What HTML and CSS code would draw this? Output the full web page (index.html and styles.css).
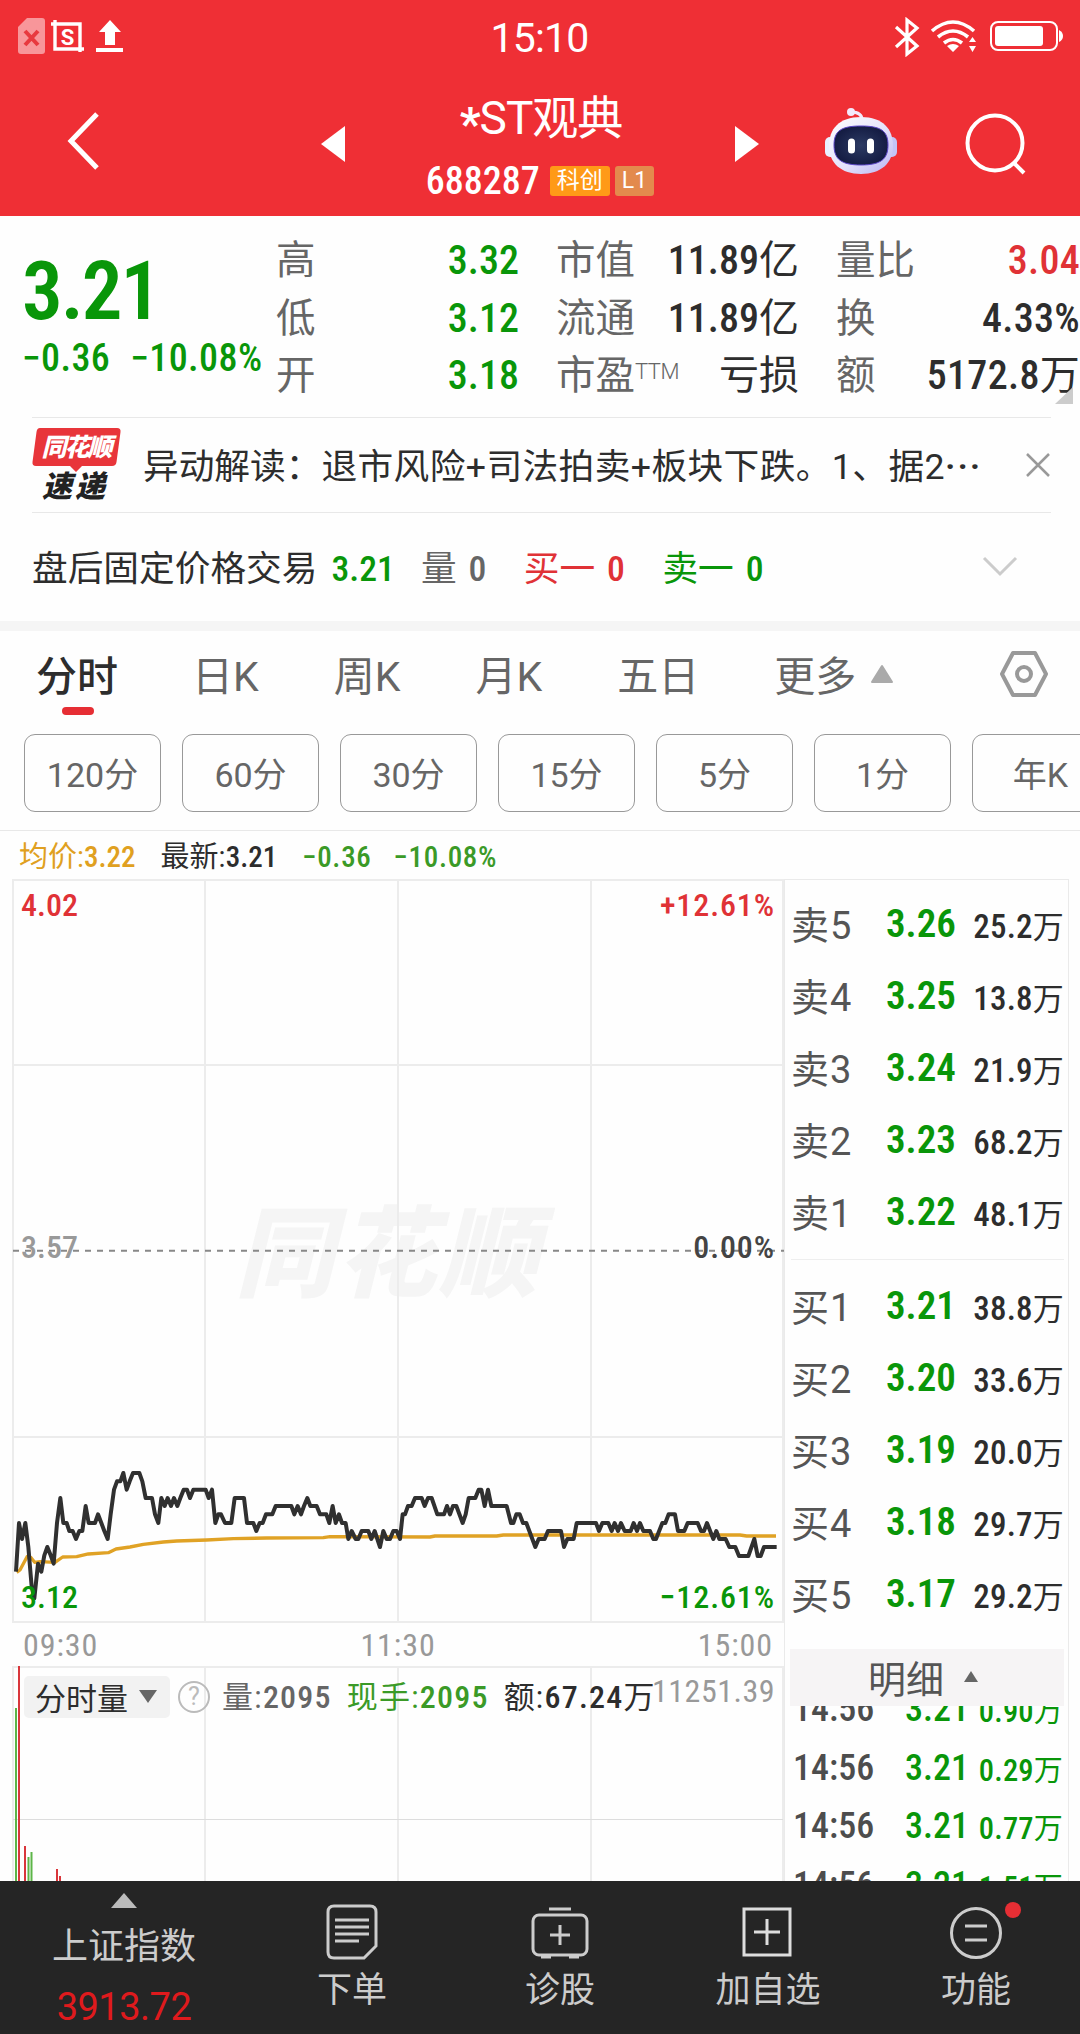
FILE: index.html
```
<!DOCTYPE html>
<html lang="zh-CN">
    <head>
        <meta charset="UTF-8" />
        <meta name="viewport" content="width=device-width, initial-scale=1.0" />
        <title>*ST观典 688287</title>
        <link rel="stylesheet" href="styles.css">
    </head>
    <body>
        <div class="header">
            <div class="status">
                <svg class="status-left" width="110" height="40" viewBox="0 0 110 40">
                    <path d="M10 1h15q3 0 3 3v30q0 3-3 3H4q-3 0-3-3V10z" fill="#f8969a" />
                    <path d="M8 14l13 14M21 14L8 28" stroke="#e8393f" stroke-width="4" />
                    <path d="M34 7h29v28M38 3v29h29" fill="none" stroke="#fff" stroke-width="3.4" />
                    <text x="50.500" y="28" class="shot-s">S</text>
                    <path d="M93 3l11 12h-6v13H88V15h-6zM79 31h27v4H79z" fill="#fff" />
                </svg>
                <div class="clock">15:10</div>
                <svg class="status-right" width="170" height="40" viewBox="0 0 170 40">
                    <g fill="none" stroke="#fff">
                        <path d="M3 10l21 19-10 8V3l10 8L3 30" stroke-width="3.2" />
                        <path d="M39 14q21-18 42 0M45 20q15-12 30 0M51 26q9-7 18 0" stroke-width="3.6" />
                        <rect x="98" y="5" width="66" height="28" rx="7" stroke-width="2" />
                    </g>
                    <path d="M54 29q6-4 12 0l-6 6zM76 25l3.500-5 3.500 5zM76 29h7l-3.500 6z" fill="#fff" />
                    <rect x="102" y="9" width="48" height="20" rx="3" fill="#fff" />
                    <path d="M166 13q4 2 4 6t-4 6z" fill="#fff" />
                </svg>
            </div>
            <div class="nav">
                <svg class="back" width="34" height="58" viewBox="0 0 34 58"><path d="M30 2L4 29l26 27" fill="none" stroke="#fff" stroke-width="5" /></svg>
                <svg class="prev" width="24" height="36"><path d="M24 0v36L0 18z" fill="#fff" /></svg>
                <div class="stock">
                    <div class="stock-name"><b>*</b>ST观典</div>
                    <div class="stock-code"><span class="num">688287</span><i class="tag">科创</i><i class="tag tag-l1">L1</i></div>
                </div>
                <svg class="next" width="24" height="36"><path d="M0 0v36l24-18z" fill="#fff" /></svg>
                <svg class="robot" width="72" height="68" viewBox="0 0 72 68">
                    <defs>
                        <linearGradient id="face" x2="1" y2="1"><stop offset="0" stop-color="#fff" /><stop offset=".55" stop-color="#e4e2fb" /><stop offset="1" stop-color="#b9b5f2" /></linearGradient>
                        <radialGradient id="screen"><stop offset="0" stop-color="#2c3a63" /><stop offset="1" stop-color="#151d44" /></radialGradient>
                    </defs>
                    <path d="M26 5q11 0 11 8" fill="none" stroke="#f3e9fb" stroke-width="3" />
                    <circle cx="26" cy="5" r="4" fill="#f3e9fb" />
                    <rect x="0" y="30" width="11" height="20" rx="5" fill="#e9f0ff" />
                    <rect x="61" y="30" width="11" height="20" rx="5" fill="#c3c4f8" />
                    <path d="M36 10c22 0 32 12 32 29S56 67 36 67 4 56 4 39s10-29 32-29z" fill="url(#face)" />
                    <path d="M36 19c20 0 27 5 27 19s-7 20-27 20S9 52 9 38s7-19 27-19z" fill="url(#screen)" stroke="#5b46c8" stroke-width="1" />
                    <path d="M26.500 35v8M45.500 35v8" stroke="#fff" stroke-width="7" stroke-linecap="round" />
                </svg>
                <svg class="search" width="62" height="62" viewBox="0 0 62 62"><g fill="none" stroke="#fff" stroke-width="4"><circle cx="30" cy="30" r="27.500" /><path d="M48 49l11 11" /></g></svg>
            </div>
        </div>

        <div class="quote">
            <div class="quote-main">
                <div class="price num green">3.21</div>
                <div class="change num green"><span>−0.36</span><span>−10.08%</span></div>
            </div>
            <dl class="col-a">
                <dt>高</dt><dd class="green">3.32</dd>
                <dt>低</dt><dd class="green">3.12</dd>
                <dt>开</dt><dd class="green">3.18</dd>
            </dl>
            <dl class="col-b">
                <dt>市值</dt><dd>11.89<u>亿</u></dd>
                <dt>流通</dt><dd>11.89<u>亿</u></dd>
                <dt>市盈<sup>TTM</sup></dt><dd><u>亏损</u></dd>
            </dl>
            <dl class="col-c">
                <dt>量比</dt><dd class="red">3.04</dd>
                <dt>换</dt><dd>4.33%</dd>
                <dt>额</dt><dd>5172.8<u>万</u></dd>
            </dl>
            <i class="corner"></i>
        </div>

        <div class="news">
            <div class="news-logo">
                <svg width="90" height="74" viewBox="0 0 90 74">
                    <path d="M8 0h77q4 0 3.500 4l-4 30q-.5 4-4.500 4H50l-6 6-6-6H4q-4 0-3.500-4l4-30Q5 0 8 0z" fill="#e8353a" />
                    <text x="44" y="28" class="logo-a">同花顺</text>
                    <text x="43" y="69" class="logo-b">速递</text>
                </svg>
            </div>
            <p>异动解读：<span>退市风险+司法拍卖+板块下跌。1、据2<b>···</b></span></p>
            <svg width="26" height="26"><path d="M2 2l22 22M24 2L2 24" stroke="#999" stroke-width="2.500" /></svg>
        </div>

        <div class="after">
            <span class="after-name">盘后固定价格交易</span>
            <span class="num green">3.21</span>
            <span class="after-vol">量 <b class="num">0</b></span>
            <span class="red">买一 <b class="num">0</b></span>
            <span class="green">卖一 <b class="num">0</b></span>
            <svg width="36" height="22"><path d="M2 2l16 16L34 2" fill="none" stroke="#ccc" stroke-width="3" /></svg>
        </div>

        <div class="tabs">
            <span class="tab active">分时</span>
            <span class="tab">日K</span>
            <span class="tab">周K</span>
            <span class="tab">月K</span>
            <span class="tab">五日</span>
            <span class="tab">更多</span>
            <svg class="more" width="24" height="20"><path d="M12 2L2 18h20z" fill="#aaa" stroke="#aaa" stroke-width="2" stroke-linejoin="round" /></svg>
            <svg class="setting" width="48" height="48" viewBox="0 0 48 48"><g fill="none" stroke="#999" stroke-width="4" stroke-linejoin="round"><path d="M13 3h22l11 21-11 21H13L2 24z" /><circle cx="24" cy="24" r="7" /></g></svg>
        </div>
        <div class="periods">
            <button>120分</button>
            <button>60分</button>
            <button>30分</button>
            <button>15分</button>
            <button>5分</button>
            <button>1分</button>
            <button>年K</button>
        </div>

        <div class="legend">
            <span class="avg">均价:<b class="num">3.22</b></span>
            <span class="last">最新:<b class="num">3.21</b></span>
            <span class="num">−0.36</span>
            <span class="num">−10.08%</span>
        </div>

        <div class="market">
            <div class="charts">
                <div class="trend">
                    <svg width="773" height="745" viewBox="0 0 773 745">
                        <text x="223" y="410" class="watermark">同花顺</text>
                        <path class="grid" d="M1 1h770v742H1zM193 1v742M386 1v742M579 1v742M1 186h770M1 558h770" />
                        <path class="mid" d="M1 371.700h771" />
                        <g transform="translate(-12 521) scale(.33333)">
                            <polyline class="line avg-line" points="50,517 60,510 82,469 92,472 104,487 120,485 165,487 188,471 230,470 265,462 325,458 348,447 390,441 430,433 490,426 530,423 620,420 700,416 800,414 970,413 990,410 1290,411 1305,408 1490,408 1510,405 2220,405 2240,408 2328,408" />
                            <polyline class="line" points="48,515 57,369 66,417 76,369 85,441 95,560 103,595 114,491 124,515 133,466 142,441 152,466 161,491 171,369 181,294 190,369 200,369 208,393 218,393 228,417 238,393 247,393 257,318 266,369 285,369 294,343 304,369 313,393 323,417 332,343 342,269 351,244 361,244 370,219 380,269 389,244 399,219 418,219 427,244 437,294 456,294 465,343 475,369 484,294 494,318 503,294 513,318 522,294 532,318 541,294 551,269 561,269 570,294 580,269 617,269 626,294 636,269 646,369 655,343 663,343 675,369 694,369 704,294 732,294 741,369 760,369 769,393 779,369 788,369 798,343 817,343 827,318 874,318 883,343 893,318 903,343 912,318 922,294 931,318 950,318 960,343 979,343 988,369 998,318 1007,369 1017,343 1026,369 1037,369 1045,417 1055,393 1067,417 1075,417 1085,393 1105,393 1114,417 1124,393 1140,441 1150,393 1160,417 1170,417 1180,393 1190,393 1200,417 1208,343 1215,343 1224,318 1235,318 1245,294 1265,294 1274,318 1284,294 1295,294 1312,343 1332,343 1341,318 1350,343 1359,318 1369,318 1388,369 1397,343 1406,294 1426,294 1436,269 1444,269 1454,318 1464,269 1474,318 1520,318 1533,369 1540,369 1549,343 1559,343 1569,369 1579,369 1597,417 1606,441 1616,417 1634,417 1644,393 1683,393 1692,441 1702,417 1721,417 1730,369 1788,369 1797,393 1807,369 1825,369 1835,393 1844,369 1854,393 1863,369 1874,393 1892,393 1901,369 1911,393 1920,369 1930,393 1950,393 1960,417 1968,417 1987,369 1996,369 2006,343 2025,343 2034,393 2053,393 2063,369 2093,369 2103,393 2112,393 2121,369 2140,417 2149,393 2158,417 2177,417 2188,441 2206,441 2217,468 2245,468 2263,417 2273,468 2282,468 2292,441 2330,441" />
                        </g>
                    </svg>
                    <div class="scale">
                        <div class="red"><span>4.02</span><span>+12.61%</span></div>
                        <div class="middle"><span class="pre">3.57</span><span>0.00%</span></div>
                        <div class="green"><span>3.12</span><span>−12.61%</span></div>
                    </div>
                </div>
                <div class="times num"><span>09:30</span><span>11:30</span><span>15:00</span></div>
                <div class="volume">
                    <svg width="773" height="216" viewBox="0 0 773 216">
                        <path class="grid" d="M771 216V1H1v215M193 1v215M386 1v215M579 1v215" />
                        <path d="M1 153.500h770" stroke="#ddd" />
                        <g stroke-width="2">
                            <path d="M4 42v174M16.500 191v25M19.500 186v30" stroke="#5db548" />
                            <path d="M7 0v216M13 180v36M45 203v13M48 210v6" stroke="#d9363b" />
                        </g>
                    </svg>
                    <div class="volume-bar">
                        <span class="pill">分时量<svg width="18" height="13"><path d="M0 0h18L9 13z" fill="#666" /></svg></span>
                        <span class="help">?</span>
                        <span class="v v-all">量:<b class="num">2095</b></span>
                        <span class="v v-now">现手:<b class="num">2095</b></span>
                        <span class="v v-sum">额:<b class="num">67.24</b>万</span>
                    </div>
                    <div class="v-max num">11251.39</div>
                </div>
            </div>

            <div class="book">
                <ul class="orders">
                    <li><span>卖5</span><b>3.26</b><em>25.2<u>万</u></em></li>
                    <li><span>卖4</span><b>3.25</b><em>13.8<u>万</u></em></li>
                    <li><span>卖3</span><b>3.24</b><em>21.9<u>万</u></em></li>
                    <li><span>卖2</span><b>3.23</b><em>68.2<u>万</u></em></li>
                    <li><span>卖1</span><b>3.22</b><em>48.1<u>万</u></em></li>
                </ul>
                <ul class="orders buy">
                    <li><span>买1</span><b>3.21</b><em>38.8<u>万</u></em></li>
                    <li><span>买2</span><b>3.20</b><em>33.6<u>万</u></em></li>
                    <li><span>买3</span><b>3.19</b><em>20.0<u>万</u></em></li>
                    <li><span>买4</span><b>3.18</b><em>29.7<u>万</u></em></li>
                    <li><span>买5</span><b>3.17</b><em>29.2<u>万</u></em></li>
                </ul>
                <div class="detail-title">明细<svg width="14" height="11"><path d="M7 0l7 11H0z" fill="#666" /></svg></div>
                <div class="ticks">
                    <ul>
                        <li><span>14:56</span><b>3.21</b><em>0.90<u>万</u></em></li>
                        <li><span>14:56</span><b>3.21</b><em>0.29<u>万</u></em></li>
                        <li><span>14:56</span><b>3.21</b><em>0.77<u>万</u></em></li>
                        <li><span>14:56</span><b>3.21</b><em>1.51<u>万</u></em></li>
                    </ul>
                </div>
            </div>
        </div>

        <div class="toolbar">
            <div class="index">
                <svg width="26" height="15"><path d="M13 0l13 15H0z" fill="#bbb" /></svg>
                <span>上证指数</span>
                <strong>3913.72</strong>
            </div>
            <div class="tool">
                <svg width="56" height="56" viewBox="0 0 56 56"><g fill="none" stroke="#ccc" stroke-width="3"><path d="M10 2h36q6 0 6 6v34L40 54H10q-6 0-6-6V8q0-6 6-6z" /><path d="M11 16h34M11 23h34M11 30h34M11 37h24" /></g></svg>
                <span>下单</span>
            </div>
            <div class="tool">
                <svg width="58" height="56" viewBox="0 0 58 56"><g fill="none" stroke="#ccc" stroke-width="3"><rect x="2" y="11" width="54" height="40" rx="6" /><path d="M18 5h22M29 21v20M19 31h20" /><path d="M10 53h10M38 53h10" /></g></svg>
                <span>诊股</span>
            </div>
            <div class="tool">
                <svg width="56" height="56" viewBox="0 0 56 56"><path d="M4 5h46v46H4zM27 15v26M14 28h26" fill="none" stroke="#ddd" stroke-width="3" /></svg>
                <span>加自选</span>
            </div>
            <div class="tool">
                <svg width="56" height="56" viewBox="0 0 56 56"><g fill="none" stroke="#ccc" stroke-width="3"><circle cx="28" cy="29" r="24.500" /><path d="M17 22h22M17 36h22" /></g></svg>
                <span>功能</span>
                <i class="dot"></i>
            </div>
        </div>
    </body>
</html>
```
FILE: styles.css
```
* {
    box-sizing: border-box;
}
body {
    margin: 0;
    width: 1080px;
    height: 2034px;
    overflow: hidden;
    display: flex;
    flex-direction: column;
    font-family: Roboto, 'Noto Sans CJK SC', sans-serif;
    font-weight: 390;
    color: #2d2d2d;
    background: #fefefe;
}
svg {
    display: block;
    flex: none;
}
ul, dl, dt, dd, p {
    margin: 0;
    padding: 0;
    list-style: none;
}
b, i, em, u {
    font-weight: inherit;
    font-style: normal;
    text-decoration: none;
}
u {
    font-weight: 400;
}
.num {
    font-stretch: 75%;
    font-weight: 500;
}
.green {
    color: #099609;
}
.red {
    color: #e03236;
}

/* header */
.header {
    flex: none;
    height: 216px;
    background: #ef2f35;
    color: #fff;
}
.status {
    display: flex;
    justify-content: space-between;
    height: 74px;
    padding: 17px 17px 0 17px;
}
.shot-s {
    font-size: 22px;
    font-weight: 700;
    fill: #fff;
    text-anchor: middle;
}
.clock {
    margin-left: 59px;
    line-height: 43px;
    font-size: 41px;
    font-weight: 400;
    letter-spacing: -0.8px;
}
.nav {
    display: flex;
    align-items: flex-start;
    padding-left: 67px;
}
.back {
    margin-top: 38px;
}
.prev {
    margin: 52px 0 0 220px;
}
.next {
    margin-top: 52px;
}
.stock {
    width: 390px;
    text-align: center;
}
.stock-name {
    margin-top: 13px;
    padding-left: 2px;
    line-height: 62px;
    font-size: 46px;
    font-weight: 400;
    letter-spacing: -1px;
}
.stock-name b {
    font-weight: 700;
    position: relative;
    top: 6px;
}
.stock-code {
    display: flex;
    justify-content: center;
    align-items: center;
    height: 64px;
    line-height: 38px;
    font-size: 38px;
}
.tag {
    height: 30px;
    margin-left: 10px;
    padding: 0 7px;
    border-radius: 3px;
    font-size: 23px;
    line-height: 29px;
    background: #ff9a17;
}
.tag-l1 {
    margin-left: 5px;
    background: #e38a4d;
}
.robot {
    margin: 33px 0 0 66px;
}
.search {
    margin: 39px 0 0 68px;
}

/* quote */
.quote {
    flex: none;
    position: relative;
    display: flex;
    height: 201px;
}
.quote-main {
    width: 276px;
    padding-left: 22px;
}
.price {
    margin-top: 30px;
    font-size: 81px;
    line-height: 92px;
    font-weight: 560;
    letter-spacing: -2px;
}
.change {
    display: flex;
    gap: 20px;
    font-size: 38px;
    line-height: 40px;
    letter-spacing: 0.4px;
}
.quote dl {
    display: grid;
    grid-template-columns: 80px 1fr;
    grid-auto-rows: 57.5px;
    margin-top: 16px;
    height: 173px;
    line-height: 58px;
    font-size: 39.5px;
    white-space: nowrap;
}
.quote dt {
    color: #666;
}
.quote dd {
    text-align: right;
    font-size: 40px;
    font-weight: 550;
    font-stretch: 75%;
}
.col-a {
    width: 243px;
}
.col-b {
    width: 243px;
    margin-left: 37px;
}
.col-c {
    width: 244px;
    margin-left: 37px;
}
.col-c dd {
    letter-spacing: 0.3px;
}
.quote sup {
    position: relative;
    top: 4px;
    font-size: 22px;
    font-weight: 300;
    line-height: 1px;
    letter-spacing: -0.5px;
}
.corner {
    position: absolute;
    right: 7px;
    bottom: 13px;
    border-left: 18px solid transparent;
    border-bottom: 17px solid #ccc;
}

/* news */
.news {
    flex: none;
    display: flex;
    align-items: center;
    height: 96px;
    margin: 0 29px 0 32px;
    border-top: 1px solid #e8e8e8;
    border-bottom: 1px solid #e8e8e8;
    font-size: 35.7px;
}
.news p {
    width: 860px;
    margin: -4px 24px 0 21px;
    white-space: nowrap;
}
.news p span {
    letter-spacing: 0.4px;
}
.news p b {
    font-weight: 600;
    letter-spacing: 2px;
}
.logo-a {
    font-size: 25px;
    font-weight: 900;
    font-style: italic;
    fill: #fff;
    text-anchor: middle;
    letter-spacing: -2px;
}
.logo-b {
    font-size: 30px;
    font-weight: 900;
    font-style: italic;
    letter-spacing: 3px;
    fill: #222;
    text-anchor: middle;
}
.after {
    flex: none;
    display: flex;
    align-items: center;
    height: 118px;
    padding: 0 62px 0 32px;
    border-bottom: 10px solid #f5f5f5;
    font-size: 35.7px;
    line-height: 60px;
    word-spacing: 3px;
    white-space: pre;
}
.after > span {
    height: 60px;
    margin: 3px 37.5px 0 0;
}
.after > .after-name {
    margin-right: 14px;
}
.after > .after-name + span {
    margin-right: 26px;
}
.after-vol {
    color: #666;
}
.after svg {
    margin: -1px 0 0 auto;
}

/* tabs */
.tabs {
    flex: none;
    display: flex;
    height: 103px;
    padding: 0 32px 0 36px;
    align-items: center;
    color: #666;
    font-size: 41px;
}
.tab {
    position: relative;
    top: -10px;
    margin-right: 75px;
    white-space: nowrap;
}
.tab.active {
    color: #2d2d2d;
    font-weight: 500;
    margin-right: 74px;
}
.tab.active::after {
    content: '';
    position: absolute;
    left: 26px;
    bottom: -12px;
    width: 32px;
    height: 8px;
    border-radius: 4px;
    background: #e62e34;
}
.tab:nth-child(6) {
    margin-right: 14px;
}
.more {
    margin-top: -17px;
}
.setting {
    margin: -17px 0 0 auto;
}
.periods {
    flex: none;
    display: flex;
    gap: 21px;
    height: 97px;
    padding-left: 24px;
    border-bottom: 1px solid #e8e8e8;
}
.periods button {
    flex: none;
    width: 137px;
    height: 78px;
    border: 1px solid #999;
    border-radius: 11px;
    background: none;
    color: #666;
    font: inherit;
    font-size: 34px;
    padding: 0 0 2px;
}
.legend {
    flex: none;
    display: flex;
    height: 48px;
    padding-left: 19px;
    line-height: 53px;
    font-size: 29px;
    color: #3b9a27;
}
.legend span {
    margin-right: 25px;
}
.legend > .num {
    margin-right: 22px;
    letter-spacing: 0.7px;
}
.avg {
    color: #e0a020;
}
.last {
    color: #2d2d2d;
}

/* charts */
.market {
    flex: none;
    display: flex;
    height: 1002px;
    padding-left: 12px;
    overflow: hidden;
}
.charts {
    width: 772px;
}
.trend {
    position: relative;
    height: 745px;
}
.grid {
    fill: none;
    stroke: #ececec;
    stroke-width: 2;
}
.mid {
    stroke: #888;
    stroke-width: 2;
    stroke-dasharray: 6 6;
}
.line {
    fill: none;
    stroke: #303030;
    stroke-width: 12;
    stroke-linejoin: round;
}
.avg-line {
    stroke: #e0a225;
    stroke-width: 10;
}
.watermark {
    font-size: 99px;
    font-weight: 900;
    font-style: italic;
    letter-spacing: 3px;
    fill: #f5f5f5;
}
.scale {
    position: absolute;
    left: 9px;
    right: 9px;
    top: 7px;
    height: 730px;
    display: flex;
    flex-direction: column;
    justify-content: space-between;
    font-size: 32px;
    font-weight: 500;
    font-stretch: 75%;
    line-height: 38px;
    color: #444;
}
.scale div {
    display: flex;
    justify-content: space-between;
}
.scale span + span {
    letter-spacing: 0.9px;
}
.scale .middle {
    margin-top: -8px;
}
.scale .pre {
    color: #999;
}
.times {
    display: flex;
    justify-content: space-between;
    height: 42px;
    padding: 0 11px;
    font-size: 32px;
    font-weight: 450;
    letter-spacing: 0.9px;
    line-height: 42px;
    color: #999;
}
.volume {
    position: relative;
    height: 216px;
}
.volume-bar {
    position: absolute;
    left: 12px;
    top: 10px;
    display: flex;
    align-items: center;
    height: 42px;
    font-size: 31px;
    white-space: nowrap;
}
.volume-bar .num {
    font-size: 32px;
}
.v {
    margin: -5px 15px 0 0;
    letter-spacing: 1.2px;
}
.pill {
    display: flex;
    align-items: center;
    justify-content: space-between;
    width: 146px;
    height: 42px;
    padding: 0 13px 2px 11px;
    border-radius: 5px;
    background: #f2f2f2;
}
.help {
    width: 32px;
    height: 32px;
    margin: 0 12px 0 8px;
    border: 2px solid #bbb;
    border-radius: 50%;
    color: #bbb;
    font-size: 25px;
    line-height: 28px;
    text-align: center;
}
.v-all {
    color: #666;
}
.v-now {
    color: #3b9a27;
}
.v-max {
    position: absolute;
    right: 9px;
    top: 6px;
    font-size: 32px;
    font-weight: 450;
    letter-spacing: 0.5px;
    line-height: 38px;
    color: #999;
}

/* order book */
.book {
    width: 285px;
    border: 1px solid #eaeaea;
    border-bottom: 0;
    padding: 8px 4px 0 6px;
}
.orders li {
    display: flex;
    align-items: center;
    height: 72px;
}
.orders span {
    width: 95px;
    margin-top: -3px;
    font-size: 38px;
    letter-spacing: 1px;
    color: #555;
}
.orders b, .ticks b {
    color: #099609;
    font-size: 39px;
    font-weight: 600;
    font-stretch: 75%;
}
.orders em, .ticks em {
    margin-left: auto;
    font-size: 33px;
    font-weight: 500;
    font-stretch: 75%;
    letter-spacing: 0.2px;
    white-space: nowrap;
}
.orders u {
    font-size: 31px;
}
.orders.buy {
    margin-top: 11px;
    padding-top: 10px;
    border-top: 1px solid #eee;
}
.detail-title {
    display: flex;
    align-items: center;
    justify-content: center;
    gap: 20px;
    height: 57px;
    margin: 19px 0 0 -1px;
    padding: 0 8px 2px 0;
    font-size: 38px;
    color: #555;
    background: #f6f4f5;
}
.ticks {
    height: 175px;
    overflow: hidden;
}
.ticks ul {
    margin-top: -26px;
}
.ticks li {
    display: flex;
    align-items: center;
    height: 58.5px;
    padding: 0 1px 0 2px;
}
.ticks span {
    width: 112px;
    font-size: 36px;
    font-weight: 500;
    font-stretch: 75%;
    color: #4d4d4d;
}
.ticks b {
    font-size: 36px;
    font-weight: 500;
}
.ticks em {
    font-size: 30.5px;
    color: #099609;
}
.ticks u {
    font-size: 29px;
}

/* toolbar */
.toolbar {
    flex: none;
    display: flex;
    height: 153px;
    background: #252525;
    color: #ccc;
}
.index {
    display: flex;
    flex-direction: column;
    align-items: center;
    width: 248px;
    padding-top: 12px;
    font-size: 36px;
}
.index span {
    margin-top: 12px;
    line-height: 54px;
}
.index strong {
    margin-top: 8px;
    font-size: 38px;
    line-height: 50px;
    font-weight: 390;
    letter-spacing: -0.5px;
    color: #df1a1d;
}
.tool {
    position: relative;
    display: flex;
    flex-direction: column;
    align-items: center;
    width: 208px;
    padding-top: 23px;
    font-size: 35px;
}
.tool span {
    margin-top: 3px;
    line-height: 56px;
}
.dot {
    position: absolute;
    left: 133px;
    top: 21px;
    width: 16px;
    height: 16px;
    border-radius: 50%;
    background: #e62e34;
}
```
